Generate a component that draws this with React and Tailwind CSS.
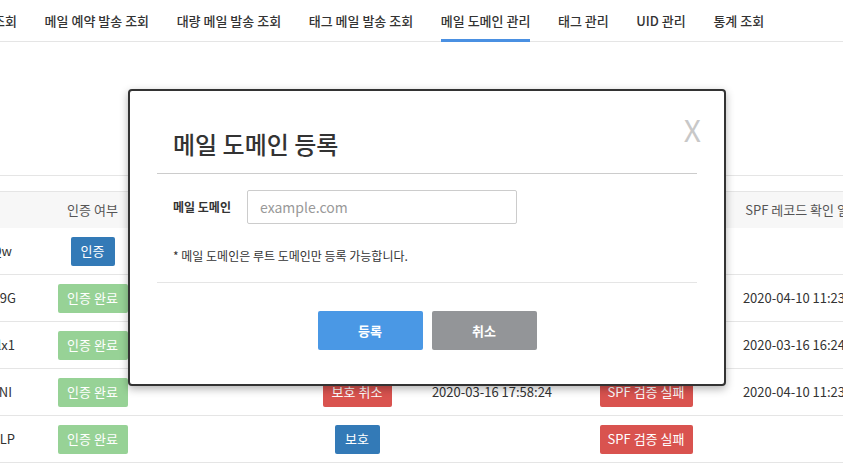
import React from "react";

const tabs = [
  "메일 예약 발송 조회",
  "대량 메일 발송 조회",
  "태그 메일 발송 조회",
  "메일 도메인 관리",
  "태그 관리",
  "UID 관리",
  "통계 조회",
];

const rows = [
  { key: "k3Jd8sQw", pad: "pr-[33px]", auth: "pending" },
  { key: "aPq7Xe39G", pad: "pr-[29px]", auth: "done", spfDate: "2020-04-10 11:23:41" },
  { key: "mZt4Hylx1", pad: "pr-[30px]", auth: "done", spfDate: "2020-03-16 16:24:09" },
  {
    key: "bV2rYd NI",
    pad: "pr-[33px]",
    auth: "done",
    protect: "cancel",
    date: "2020-03-16 17:58:24",
    spf: true,
    spfDate: "2020-04-10 11:23:41",
  },
  { key: "uE6wQsaLP", pad: "pr-[30px]", auth: "done", protect: "on", spf: true },
];

const cols = "grid grid-cols-[45px_95px_150px_134px_136px_172px_142px]";

function Badge({ color, className = "", children }) {
  return (
    <span
      className={`inline-flex h-[29px] items-center justify-center rounded-[2px] text-[13px] text-white ${color} ${className}`}
    >
      {children}
    </span>
  );
}

function Row({ r }) {
  return (
    <div className={`${cols} h-[47px] items-center border-b border-[#e5e5e5] text-[13px] text-[#333]`}>
      <div className={`flex justify-end whitespace-nowrap ${r.pad}`}>{r.key}</div>
      <div className="flex justify-center">
        {r.auth === "pending" ? (
          <Badge color="bg-[#337ab7]" className="w-[44px]">인증</Badge>
        ) : (
          <Badge color="bg-[#97d296]" className="w-[70px]">인증 완료</Badge>
        )}
      </div>
      <div />
      <div className="flex justify-center">
        {r.protect === "cancel" && (
          <Badge color="bg-[#d9534f]" className="w-[69px]">보호 취소</Badge>
        )}
        {r.protect === "on" && (
          <Badge color="bg-[#337ab7]" className="w-[45px]">보호</Badge>
        )}
      </div>
      <div className="text-center whitespace-nowrap">{r.date}</div>
      <div className="flex justify-center">
        {r.spf && (
          <Badge color="bg-[#d9534f]" className="w-[93px]">SPF 검증 실패</Badge>
        )}
      </div>
      <div className="text-center whitespace-nowrap">{r.spfDate}</div>
    </div>
  );
}

export default function App() {
  return (
    <div className="relative h-[468px] w-[843px] overflow-hidden bg-white font-['Noto_Sans_CJK_KR','Noto_Sans',sans-serif] text-[#333]">
      {/* top tab navigation */}
      <nav className="flex h-[42px] gap-[27.6px] border-b border-[#e5e5e5] text-[13px] font-medium text-[#333]">
        <div className="flex w-[17px] items-center justify-end overflow-hidden whitespace-nowrap">
          개별 메일 발송 조회
        </div>
        {tabs.map((t) => (
          <div key={t} className="relative flex items-center whitespace-nowrap">
            {t}
            {t === "메일 도메인 관리" && (
              <span className="absolute bottom-[-1px] left-0 right-0 h-[3px] bg-[#4a90e2]" />
            )}
          </div>
        ))}
      </nav>

      {/* search area separator */}
      <div className="h-[134px] border-b border-[#e5e5e5]" />

      {/* domain table */}
      <div className="mt-[15px]">
        <div className={`${cols} h-[37px] items-center border-t border-[#e5e5e5] bg-[#f7f7f7] text-[13px] text-[#555]`}>
          <div />
          <div className="text-center">인증 여부</div>
          <div />
          <div />
          <div />
          <div />
          <div className="text-center whitespace-nowrap">SPF 레코드 확인 일시</div>
        </div>
        {rows.map((r) => (
          <Row key={r.key} r={r} />
        ))}
      </div>

      {/* register domain dialog */}
      <div className="absolute left-[128px] top-[89px] flex h-[297px] w-[598px] flex-col rounded-[4px] border-2 border-[#333] bg-white px-[27px] shadow-[0_3px_8px_rgba(0,0,0,0.3)]">
        <button className="absolute right-[23px] top-[23px] text-[30px] leading-none font-normal text-[#c8c8c8]">
          X
        </button>
        <div className="h-[83px] border-b border-[#ccc] pl-[16px] pt-[37px]">
          <h2 className="text-[24px] leading-[32px] font-medium text-[#333]">메일 도메인 등록</h2>
        </div>
        <div className="mt-[16px] flex items-center pl-[16px]">
          <label className="w-[74px] text-[12px] font-bold text-[#333]">메일 도메인</label>
          <input
            className="h-[34px] w-[270px] rounded-[2px] border border-[#ccc] px-[12px] text-[14px] outline-none placeholder:text-[#999]"
            placeholder="example.com"
          />
        </div>
        <p className="mt-[23px] mb-[17px] pl-[16px] text-[12px] leading-[18px] text-[#333]">
          * 메일 도메인은 루트 도메인만 등록 가능합니다.
        </p>
        <div className="flex justify-center gap-[9px] border-t border-[#e5e5e5] pt-[28px]">
          <button className="h-[39px] w-[105px] rounded-[2px] bg-[#4a98e5] text-[13px] font-bold text-white">
            등록
          </button>
          <button className="h-[39px] w-[105px] rounded-[2px] bg-[#939598] text-[13px] font-bold text-white">
            취소
          </button>
        </div>
      </div>
    </div>
  );
}
